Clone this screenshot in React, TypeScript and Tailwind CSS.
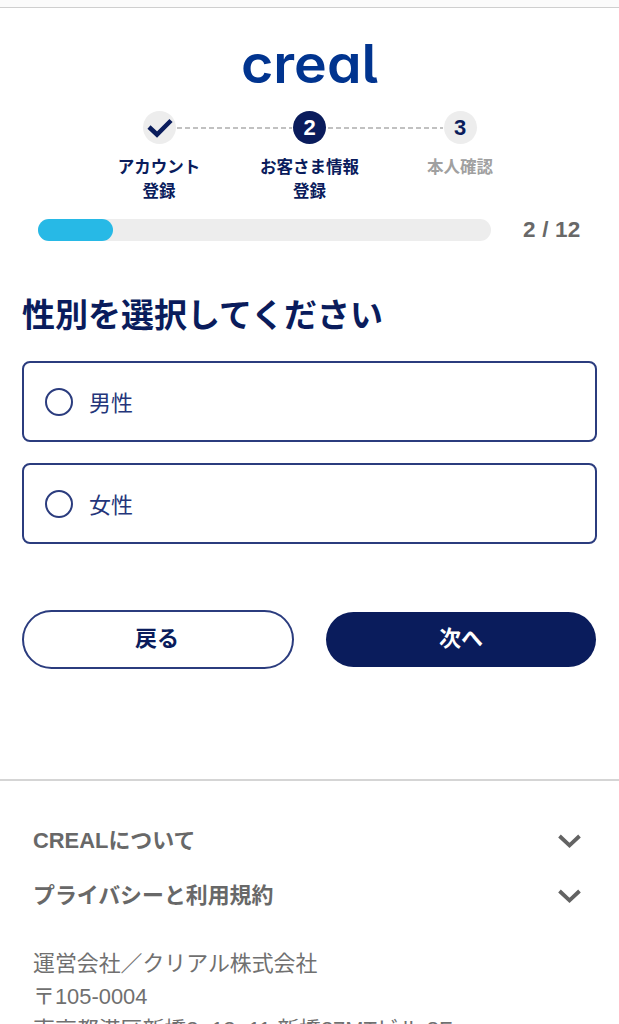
import React, { useState } from "react";

const steps = [
  { number: 1, lines: ["アカウント", "登録"], status: "done" },
  { number: 2, lines: ["お客さま情報", "登録"], status: "current" },
  { number: 3, lines: ["本人確認"], status: "upcoming" },
];

const options = ["男性", "女性"];

const footerMenus = ["CREALについて", "プライバシーと利用規約"];

const Logo = () => (
  <svg
    className="block w-[136px] h-12 overflow-visible"
    viewBox="0 0 136 48"
    role="img"
  >
    <text
      x="-1"
      y="41"
      textLength="137"
      lengthAdjust="spacingAndGlyphs"
      className="font-['Inter'] font-semibold text-[53px] fill-[#01348f] [font-feature-settings:'cv11','cv05']"
    >
      creal
    </text>
  </svg>
);

const Connector = () => (
  <svg className="w-[116px] h-[2px] mt-4 shrink-0" viewBox="0 0 116 2">
    <line
      x1="1"
      y1="1"
      x2="116"
      y2="1"
      stroke="#adadad"
      strokeWidth="1.6"
      strokeDasharray="5 3"
    />
  </svg>
);

const StepCircle = ({ number, status }: { number: number; status: string }) => (
  <div
    className={`flex items-center justify-center w-[33px] h-[33px] rounded-full text-[22px] leading-none font-bold ${
      status === "current"
        ? "bg-[#0a1c5c] text-white"
        : "bg-[#ededed] text-[#0a1c5c]"
    }`}
  >
    {status === "done" ? (
      <svg className="w-[26px] h-[20px] ml-[2px]" viewBox="0 0 26 20" fill="none">
        <path d="M2 9L10 16.5L24 2.5" stroke="#0a1c5c" strokeWidth="4.5" />
      </svg>
    ) : (
      number
    )}
  </div>
);

const Steps = () => (
  <div className="flex justify-center mt-[21px]">
    {steps.map((step, index) => (
      <React.Fragment key={step.number}>
        {index > 0 && <Connector />}
        <div className="flex flex-col items-center w-[34.5px]">
          <StepCircle number={step.number} status={step.status} />
          <div
            className={`mt-[11px] text-center whitespace-nowrap text-[16.5px] leading-[24px] font-bold ${
              step.status === "upcoming" ? "text-[#a0a0a0]" : "text-[#0a1c5c]"
            }`}
          >
            {step.lines.map((line) => (
              <div key={line}>{line}</div>
            ))}
          </div>
        </div>
      </React.Fragment>
    ))}
  </div>
);

const Progress = ({ current, total }: { current: number; total: number }) => (
  <div className="flex items-center h-6 pl-[38px] mt-[15px]">
    <div className="w-[453px] h-[22px] rounded-full bg-[#ededed]">
      <div
        className="h-full rounded-full bg-[#27b9e6]"
        style={{ width: `${(current / total) * 100}%` }}
      />
    </div>
    <div className="ml-8 text-[22.5px] leading-6 tracking-[0.2px] font-bold text-[#686868]">
      {current} / {total}
    </div>
  </div>
);

const Chevron = () => (
  <svg className="w-6 h-4" viewBox="0 0 24 16" fill="none">
    <path d="M2.5 3L12.5 12.5L22.5 3" stroke="#636363" strokeWidth="3.8" />
  </svg>
);

const App = () => {
  const [selected, setSelected] = useState("");

  return (
    <div className="h-[1024px] overflow-hidden bg-white font-['Liberation_Sans','Noto_Sans_CJK_JP',sans-serif]">
      <div className="h-2 bg-[#fbfbfb] border-b border-[#cfcfcf]" />
      <header className="flex flex-col pt-[34px]">
        <div className="flex justify-center">
          <Logo />
        </div>
        <Steps />
        <Progress current={2} total={12} />
      </header>

      <main className="px-[22px] pt-[49px]">
        <h1 className="text-[33px] leading-[50px] font-bold text-[#0a1c5c]">
          性別を選択してください
        </h1>
        <div className="flex flex-col gap-[21px] mt-5">
          {options.map((option) => (
            <button
              key={option}
              type="button"
              onClick={() => setSelected(option)}
              className="flex items-center w-[575px] h-[81px] px-[21px] rounded-lg border-2 border-[#2b3c7e] text-[22px] text-[#24357a]"
            >
              <span className="flex items-center justify-center w-7 h-7 mr-4 rounded-full border-2 border-[#2b3c7e]">
                {selected === option && (
                  <span className="w-4 h-4 rounded-full bg-[#0a1c5c]" />
                )}
              </span>
              <span className="pt-[3px]">{option}</span>
            </button>
          ))}
        </div>

        <div className="flex items-center justify-between mt-[66px] w-[574px]">
          <button
            type="button"
            className="w-[272px] h-[59px] pb-[2px] pr-[2px] rounded-full border-2 border-[#2b3c7e] text-[22px] font-bold text-[#0a1c5c]"
          >
            戻る
          </button>
          <button
            type="button"
            className="w-[270px] h-[55px] pb-[2px] rounded-full bg-[#0a1c5c] text-[22px] font-bold text-white"
          >
            次へ
          </button>
        </div>
      </main>

      <footer className="mt-[110px] pt-8 border-t-2 border-[#d5d5d5] pl-[33px] pr-[38px] text-[#686868]">
        {footerMenus.map((menu) => (
          <div
            key={menu}
            className="flex items-center justify-between h-[55px] text-[21.9px] font-bold"
          >
            <span className="pt-[2px]">{menu}</span>
            <Chevron />
          </div>
        ))}
        <address className="mt-6 not-italic text-[21.9px] leading-[33px] whitespace-nowrap text-[#707070]">
          運営会社／クリアル株式会社
          <br />
          〒105-0004
          <br />
          東京都港区新橋2−12−11 新橋27MTビル 8F
        </address>
      </footer>
    </div>
  );
};

export default App;
